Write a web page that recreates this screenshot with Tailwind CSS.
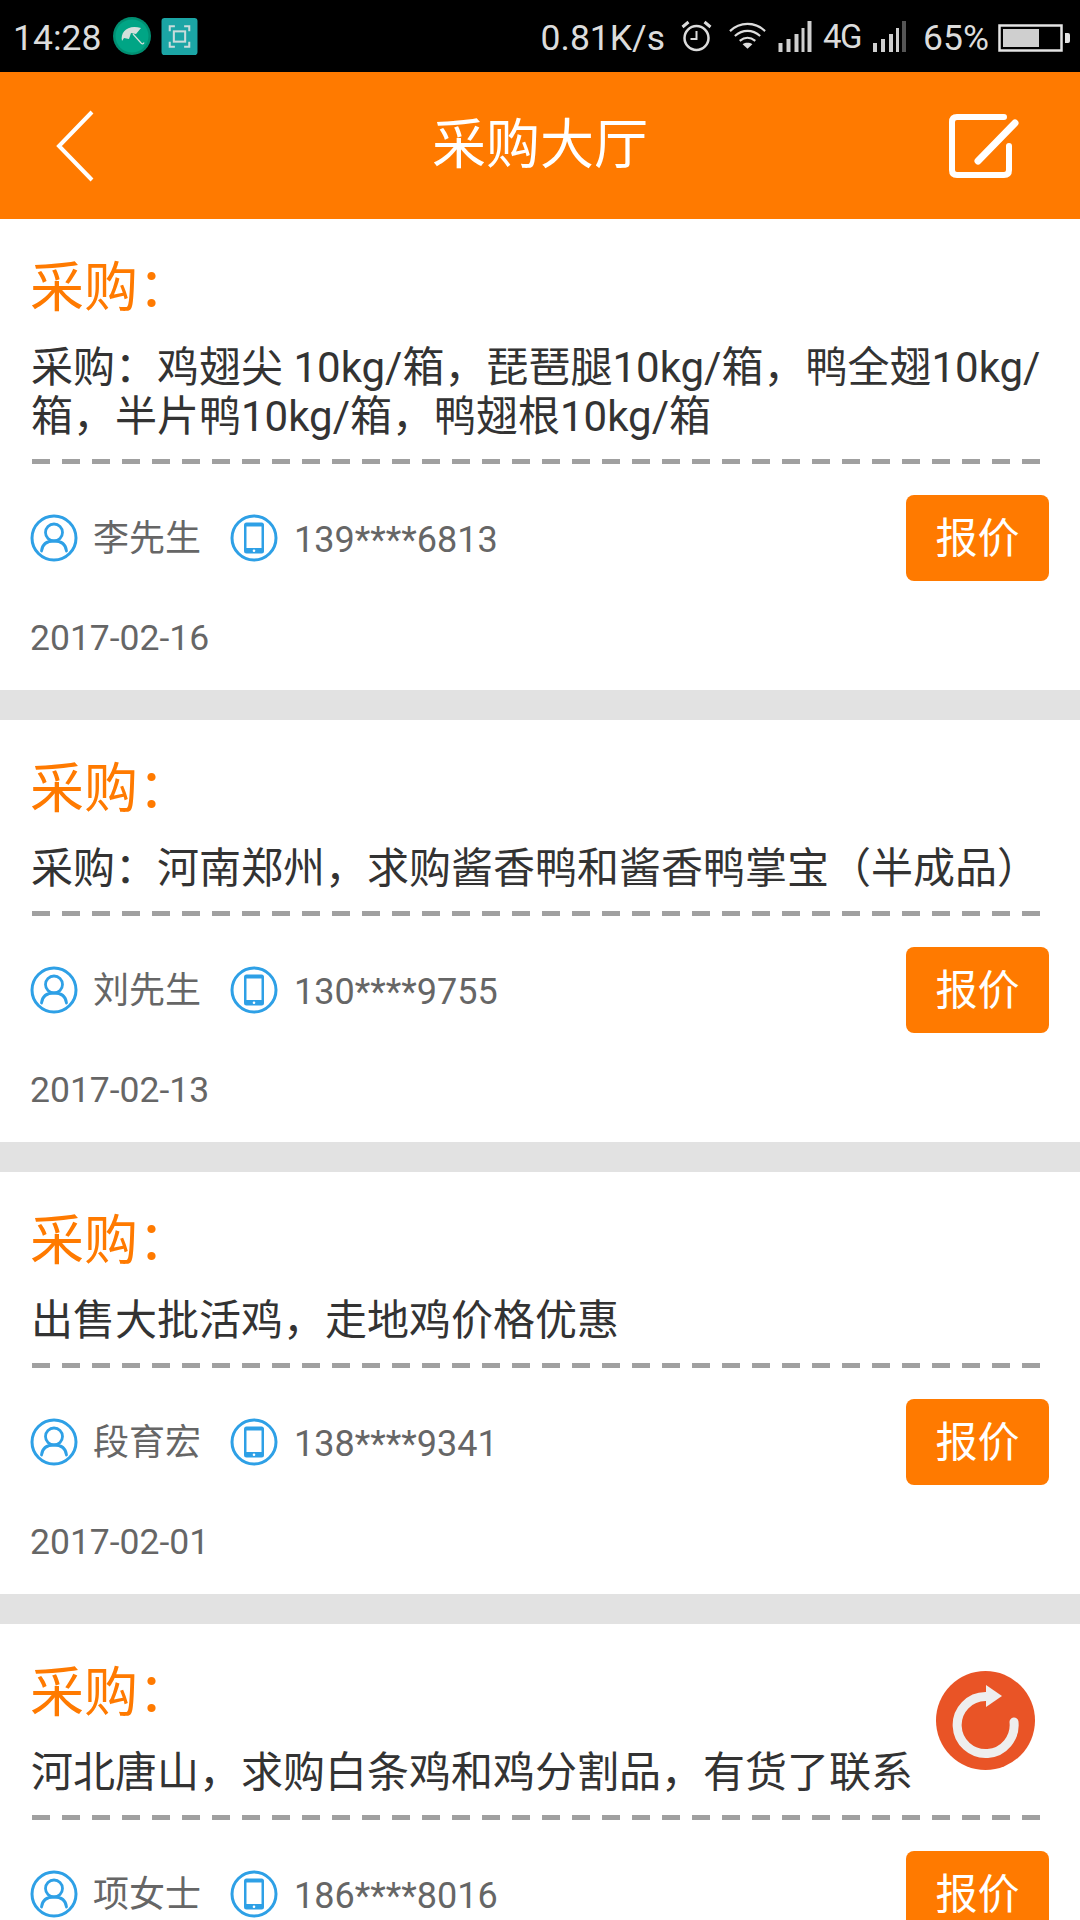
<!DOCTYPE html>
<html lang="zh"><head><meta charset="utf-8">
<script src="https://cdn.jsdelivr.net/npm/@tailwindcss/browser@4"></script>
</head>
<body class="m-0 bg-[#e2e2e2]">
<svg width="0" height="0" class="absolute">
<defs>
<symbol id="person" viewBox="0 0 48 48"><circle cx="24" cy="24" r="22" fill="none" stroke="#2ea0e6" stroke-width="3"/><circle cx="24" cy="18.500" r="8.500" fill="none" stroke="#2ea0e6" stroke-width="2.800"/><path d="M11.500 37c.8-7.500 6-10 12.500-10s11.700 2.500 12.500 10" fill="none" stroke="#2ea0e6" stroke-width="2.800" stroke-linecap="round"/></symbol>
<symbol id="phone" viewBox="0 0 48 48"><circle cx="24" cy="24" r="22" fill="none" stroke="#2ea0e6" stroke-width="3"/><rect x="14" y="8.500" width="20" height="31" rx="2.500" fill="#2ea0e6"/><rect x="16.500" y="12.500" width="15" height="21.500" fill="#fff"/><circle cx="24" cy="36.800" r="1.300" fill="#fff"/></symbol>
</defs>
</svg>
<div class="relative w-[1080px] h-[1920px] overflow-hidden font-['Roboto','Noto_Sans_CJK_SC',sans-serif]">
  <div class="h-[72px] bg-black flex items-center text-[#dcdcdc] text-[35.500px] pl-[13px] pr-[9px]">
    <span class="leading-none mt-[5px]">14:28</span>
    <svg class="ml-[12px]" width="38" height="40" viewBox="0 0 38 40"><circle cx="19" cy="20" r="19" fill="#008f72"/><circle cx="19" cy="20" r="16.500" fill="#00a585"/><path d="M9 25C7 16 15 8 28 12L23 18L18 17L16 23L11 22Z" fill="#d5e0dc"/><path d="M20 18L28 27q2 2 3-.5" fill="none" stroke="#d5e0dc" stroke-width="1.200"/></svg>
    <svg class="ml-[10px]" width="37" height="37" viewBox="0 0 35 36"><rect width="35" height="36" rx="3" fill="#1ba5a5"/><g fill="none" stroke="#c9dcdc" stroke-width="2"><path d="M8 13V8h5M22 8h5v5M27 23v5h-5M13 28H8v-5"/><rect x="12" y="13" width="11" height="10"/></g></svg>
    <span class="ml-auto leading-none mt-[5px]">0.81K/s</span>
    <svg class="ml-[16px]" width="31" height="32" viewBox="0 0 30 32"><circle cx="15" cy="18" r="12" fill="none" stroke="#dcdcdc" stroke-width="2.500"/><path d="M15 11v8h-6" fill="none" stroke="#dcdcdc" stroke-width="2"/><path d="M1 7l6-5M29 7l-6-5" stroke="#dcdcdc" stroke-width="3"/></svg>
    <svg class="ml-[17px]" width="37" height="30" viewBox="0 0 38 30"><g fill="none" stroke="#dcdcdc" stroke-width="2.200"><path d="M1 10C11 0 27 0 37 10"/><path d="M6 15C14 8 24 8 32 15"/><path d="M11 20C16 16 22 16 27 20"/></g><path d="M19 28l-5-4.500c3-2 7-2 10 0z" fill="#dcdcdc"/></svg>
    <svg class="ml-[12px]" width="35" height="32" viewBox="0 0 34 32" fill="#cfcfcf"><rect x="0" y="23" width="4" height="9"/><rect x="8" y="19" width="4" height="13"/><rect x="16" y="14" width="4" height="18"/><rect x="23" y="8" width="3" height="24"/><rect x="29" y="1" width="4" height="31"/></svg>
    <span class="ml-[10px] text-[33px] leading-none tracking-[-1.500px]">4G</span>
    <svg class="ml-[11px]" width="36" height="32" viewBox="0 0 34 32"><g fill="#cfcfcf"><rect x="0" y="23" width="4" height="9"/><rect x="8" y="19" width="4" height="13"/><rect x="16" y="14" width="4" height="18"/><rect x="23" y="8" width="3" height="24"/></g><rect x="29" y="1" width="4" height="31" fill="#555"/></svg>
    <span class="ml-[15px] leading-none mt-[5px]">65%</span>
    <svg class="ml-[9px] mt-[3px]" width="73" height="30" viewBox="0 0 73 30"><rect x="1.500" y="2.500" width="62" height="25" fill="none" stroke="#e4e4e4" stroke-width="2.500"/><rect x="5" y="6" width="36" height="18" fill="#cfcfcf"/><path d="M67 10h3q2 0 2 2v6q0 2-2 2h-3z" fill="#e4e4e4"/></svg>
  </div>
  <div class="h-[147px] bg-[#ff7a00] grid grid-cols-[1fr_auto_1fr] items-center pl-[56px] pr-[61px]">
    <svg width="38" height="72" viewBox="0 0 38 72"><path d="M36 2L3 36l33 34" fill="none" stroke="#fff" stroke-width="4"/></svg>
    <span class="text-[54px] leading-none text-white ml-[5px]">采购大厅</span>
    <svg class="justify-self-end" width="70" height="64" viewBox="0 0 70 64" fill="none" stroke="#fff" stroke-linecap="round"><path d="M55 3H8Q3 3 3 8V56Q3 61 8 61H55Q60 61 60 56V32" stroke-width="6"/><path d="M29 47L66 9" stroke-width="7"/></svg>
  </div>

  <div class="flex flex-col gap-[30px]">
    <section class="bg-white pt-[38px] pb-[27px] pl-[30px] pr-[31px]">
      <h2 class="text-[54px] leading-[64px] text-[#ff7a00] font-normal">采购：</h2>
      <p class="mt-[22px] ml-[1px] text-[42px] leading-[49px] text-[#333] -mr-[12px] [word-break:break-all]">采购：鸡翅尖 10kg/箱，琵琶腿10kg/箱，鸭全翅10kg/箱，半片鸭10kg/箱，鸭翅根10kg/箱</p>
      <div class="mt-[18px] ml-[2px] h-[5px] w-[1009px] bg-[repeating-linear-gradient(90deg,#a0a0a0_0,#a0a0a0_18px,transparent_18px,transparent_30px)]"></div>
      <div class="mt-[31px] flex items-center text-[36px] text-[#666]">
        <svg class="w-[48px] h-[48px]"><use href="#person"/></svg><span class="ml-[15px] mt-[2px]">李先生</span>
        <svg class="ml-[29px] w-[48px] h-[48px]"><use href="#phone"/></svg><span class="ml-[16px] mt-[4px]">139****6813</span>
        <button class="ml-auto w-[143px] h-[86px] rounded-[8px] bg-[#ff7a00] text-white text-[42px]">报价</button>
      </div>
      <div class="mt-[32px] text-[35.500px] leading-[50px] text-[#666]">2017-02-16</div>
    </section>

    <section class="bg-white pt-[38px] pb-[27px] pl-[30px] pr-[31px]">
      <h2 class="text-[54px] leading-[64px] text-[#ff7a00] font-normal">采购：</h2>
      <p class="mt-[22px] ml-[1px] text-[42px] leading-[49px] text-[#333] -mr-[12px]">采购：河南郑州，求购酱香鸭和酱香鸭掌宝（半成品）</p>
      <div class="mt-[18px] ml-[2px] h-[5px] w-[1009px] bg-[repeating-linear-gradient(90deg,#a0a0a0_0,#a0a0a0_18px,transparent_18px,transparent_30px)]"></div>
      <div class="mt-[31px] flex items-center text-[36px] text-[#666]">
        <svg class="w-[48px] h-[48px]"><use href="#person"/></svg><span class="ml-[15px] mt-[2px]">刘先生</span>
        <svg class="ml-[29px] w-[48px] h-[48px]"><use href="#phone"/></svg><span class="ml-[16px] mt-[4px]">130****9755</span>
        <button class="ml-auto w-[143px] h-[86px] rounded-[8px] bg-[#ff7a00] text-white text-[42px]">报价</button>
      </div>
      <div class="mt-[32px] text-[35.500px] leading-[50px] text-[#666]">2017-02-13</div>
    </section>

    <section class="bg-white pt-[38px] pb-[27px] pl-[30px] pr-[31px]">
      <h2 class="text-[54px] leading-[64px] text-[#ff7a00] font-normal">采购：</h2>
      <p class="mt-[22px] ml-[1px] text-[42px] leading-[49px] text-[#333] -mr-[12px]">出售大批活鸡，走地鸡价格优惠</p>
      <div class="mt-[18px] ml-[2px] h-[5px] w-[1009px] bg-[repeating-linear-gradient(90deg,#a0a0a0_0,#a0a0a0_18px,transparent_18px,transparent_30px)]"></div>
      <div class="mt-[31px] flex items-center text-[36px] text-[#666]">
        <svg class="w-[48px] h-[48px]"><use href="#person"/></svg><span class="ml-[15px] mt-[2px]">段育宏</span>
        <svg class="ml-[29px] w-[48px] h-[48px]"><use href="#phone"/></svg><span class="ml-[16px] mt-[4px]">138****9341</span>
        <button class="ml-auto w-[143px] h-[86px] rounded-[8px] bg-[#ff7a00] text-white text-[42px]">报价</button>
      </div>
      <div class="mt-[32px] text-[35.500px] leading-[50px] text-[#666]">2017-02-01</div>
    </section>

    <section class="bg-white pt-[38px] pb-[27px] pl-[30px] pr-[31px]">
      <h2 class="text-[54px] leading-[64px] text-[#ff7a00] font-normal">采购：</h2>
      <p class="mt-[22px] ml-[1px] text-[42px] leading-[49px] text-[#333] -mr-[12px]">河北唐山，求购白条鸡和鸡分割品，有货了联系</p>
      <div class="mt-[18px] ml-[2px] h-[5px] w-[1009px] bg-[repeating-linear-gradient(90deg,#a0a0a0_0,#a0a0a0_18px,transparent_18px,transparent_30px)]"></div>
      <div class="mt-[31px] flex items-center text-[36px] text-[#666]">
        <svg class="w-[48px] h-[48px]"><use href="#person"/></svg><span class="ml-[15px] mt-[2px]">项女士</span>
        <svg class="ml-[29px] w-[48px] h-[48px]"><use href="#phone"/></svg><span class="ml-[16px] mt-[4px]">186****8016</span>
        <button class="ml-auto w-[143px] h-[86px] rounded-[8px] bg-[#ff7a00] text-white text-[42px]">报价</button>
      </div>
    </section>
  </div>

  <svg class="absolute left-[936px] top-[1671px]" width="99" height="99" viewBox="0 0 99 99">
    <circle cx="49.500" cy="49.500" r="49.500" fill="#e95426"/>
    <path d="M78 51A28.500 28.500 0 1 1 49.500 25.500" fill="none" stroke="#eeeeee" stroke-width="9" stroke-linecap="round"/>
    <path d="M50 14L66 25L50 36Z" fill="#eeeeee"/>
  </svg>
</div>
</body></html>
